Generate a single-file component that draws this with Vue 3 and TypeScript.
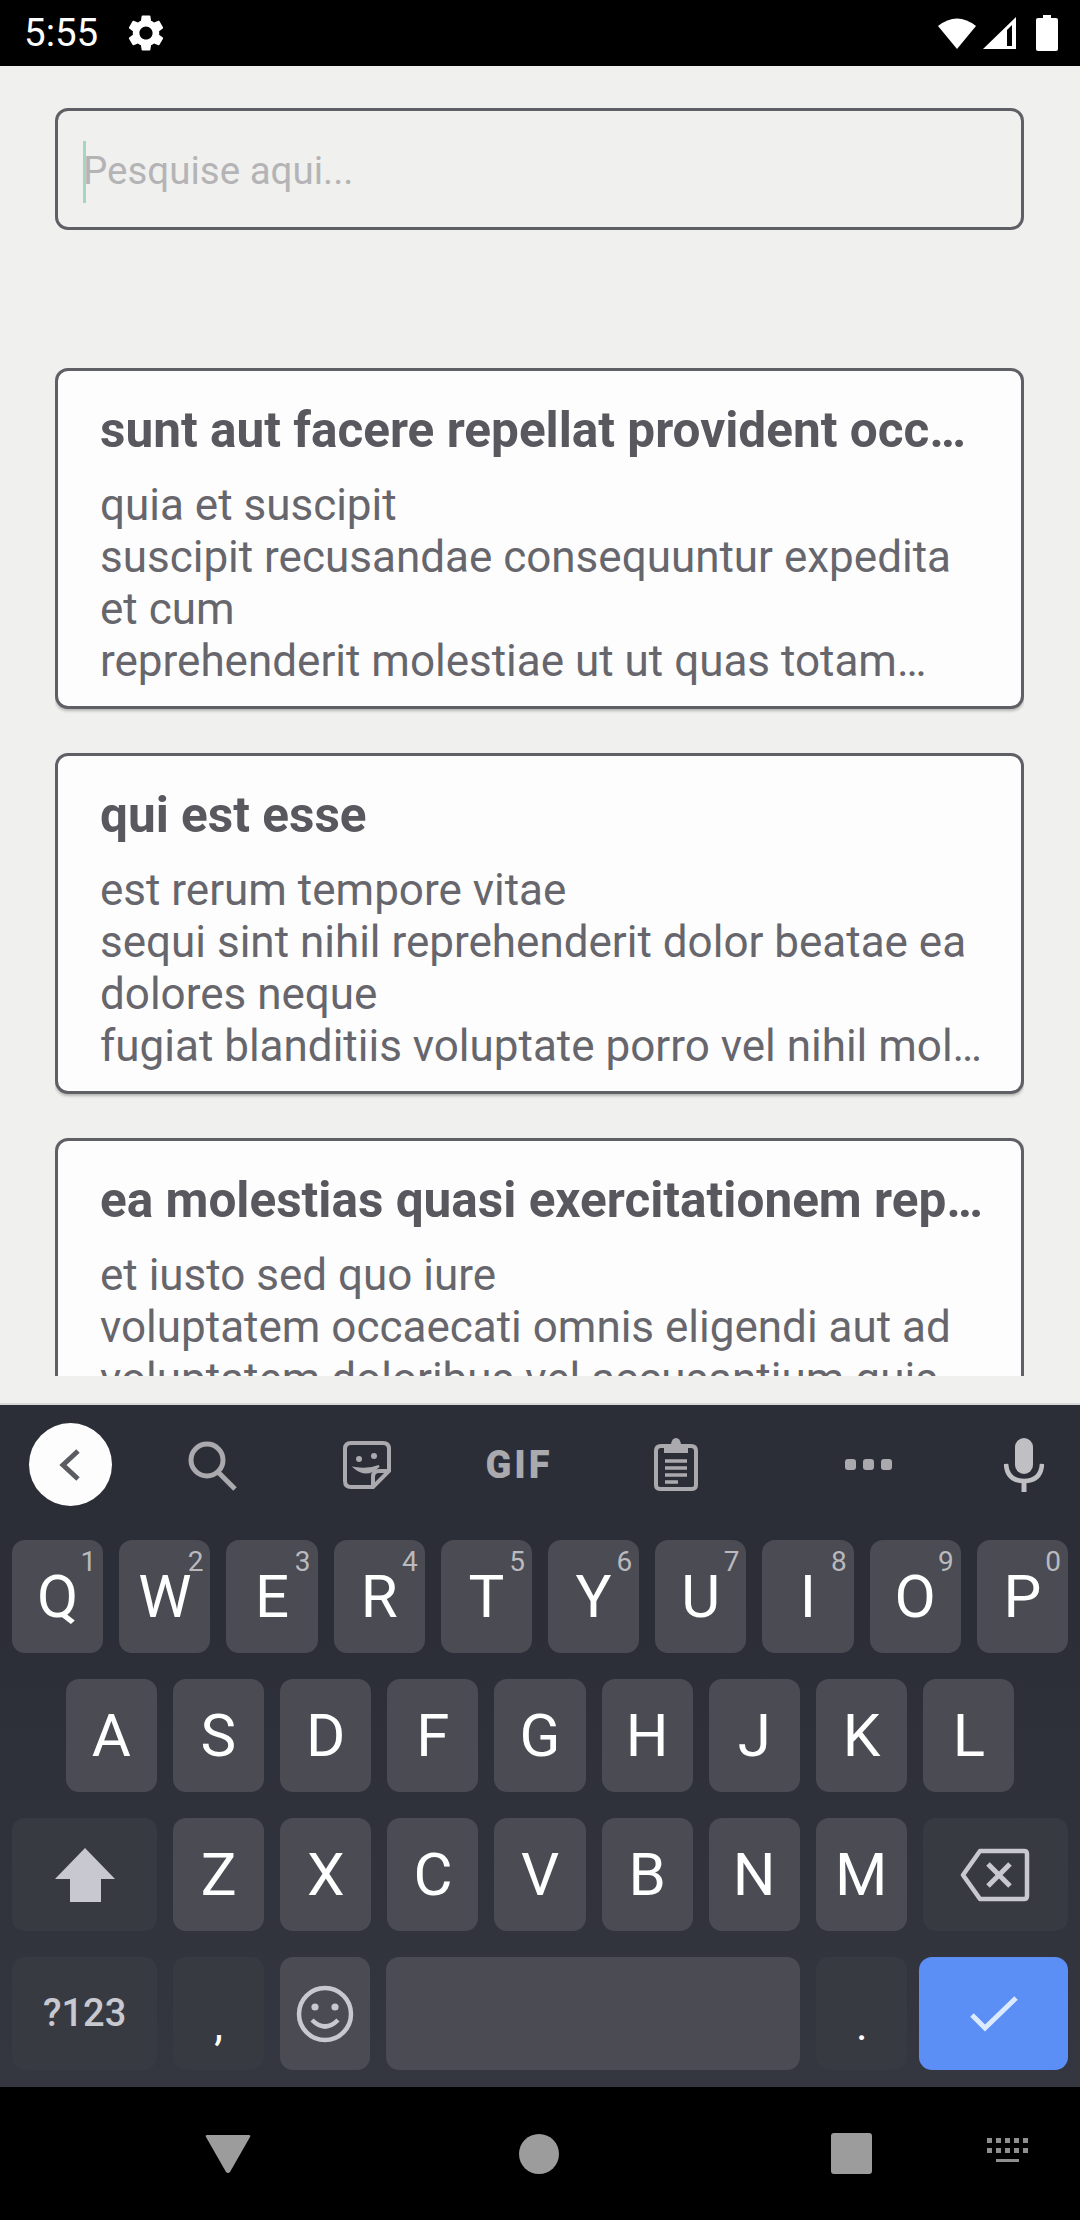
<script setup lang="ts">
interface Post {
  title: string
  lines: string
}

const posts: Post[] = [
  {
    title: 'sunt aut facere repellat provident occaecati excepturi optio reprehenderit',
    lines: 'quia et suscipit\nsuscipit recusandae consequuntur expedita et cum\nreprehenderit molestiae ut ut quas totam…',
  },
  {
    title: 'qui est esse',
    lines: 'est rerum tempore vitae\nsequi sint nihil reprehenderit dolor beatae ea dolores neque\nfugiat blanditiis voluptate porro vel nihil mol…',
  },
  {
    title: 'ea molestias quasi exercitationem repellat qui ipsa sit aut',
    lines: 'et iusto sed quo iure\nvoluptatem occaecati omnis eligendi aut ad\nvoluptatem doloribus vel accusantium quis',
  },
]

const row1 = [
  ['Q', '1'], ['W', '2'], ['E', '3'], ['R', '4'], ['T', '5'],
  ['Y', '6'], ['U', '7'], ['I', '8'], ['O', '9'], ['P', '0'],
]
const row2 = ['A', 'S', 'D', 'F', 'G', 'H', 'J', 'K', 'L']
const row3 = ['Z', 'X', 'C', 'V', 'B', 'N', 'M']
</script>

<template>
  <div class="screen">
    <header class="status">
      <span class="time">5:55</span>
      <svg class="gear" viewBox="0 0 24 24" width="44" height="44">
        <path fill="#fff" d="M19.14 12.94c.04-.3.06-.61.06-.94 0-.32-.02-.64-.07-.94l2.03-1.58c.18-.14.23-.41.12-.61l-1.92-3.32c-.12-.22-.37-.29-.59-.22l-2.39.96c-.5-.38-1.03-.7-1.62-.94l-.36-2.54c-.04-.24-.24-.41-.48-.41h-3.84c-.24 0-.43.17-.47.41l-.36 2.54c-.59.24-1.13.57-1.62.94l-2.39-.96c-.22-.08-.47 0-.59.22L2.74 8.87c-.12.21-.08.47.12.61l2.03 1.58c-.05.3-.09.63-.09.94s.02.64.07.94l-2.03 1.58c-.18.14-.23.41-.12.61l1.92 3.32c.12.22.37.29.59.22l2.39-.96c.5.38 1.03.7 1.62.94l.36 2.54c.05.24.24.41.48.41h3.84c.24 0 .44-.17.47-.41l.36-2.54c.59-.24 1.13-.56 1.62-.94l2.39.96c.22.08.47 0 .59-.22l1.92-3.32c.12-.22.07-.47-.12-.61l-2.01-1.58zM12 15.6c-1.98 0-3.6-1.62-3.6-3.6s1.62-3.6 3.6-3.6 3.6 1.62 3.6 3.6-1.62 3.6-3.6 3.6z" />
      </svg>
      <div class="status-right">
        <svg viewBox="0 0 40 34" width="40" height="34">
          <path fill="#fff" d="M20 33 L1 10 Q20 -5 39 10 Z" />
        </svg>
        <svg class="signal" viewBox="0 0 35 34" width="35" height="34">
          <path fill="#fff" d="M1 33 L34 1 V33 Z" />
          <path fill="#000" d="M25 14 L30 9 V30 H25 Z" />
        </svg>
        <svg class="battery" viewBox="0 0 22 36" width="22" height="36">
          <path fill="#fff" d="M7 0 H15 V3 H20 Q22 3 22 5 V34 Q22 36 20 36 H2 Q0 36 0 34 V5 Q0 3 2 3 H7 Z" />
        </svg>
      </div>
    </header>

    <main class="content">
      <div class="search">
        <span class="caret"></span>
        <span class="placeholder">Pesquise aqui...</span>
      </div>
      <div class="list">
        <article v-for="post in posts" :key="post.title" class="card">
          <h2 class="title">{{ post.title }}</h2>
          <p class="body">{{ post.lines }}</p>
        </article>
      </div>
    </main>

    <section class="keyboard">
      <div class="toolbar">
        <div class="tool">
          <span class="back">
            <svg viewBox="0 0 24 36" width="24" height="36">
              <path d="M20 4 L5 18 L20 32" fill="none" stroke="#5b5c62" stroke-width="5" />
            </svg>
          </span>
        </div>
        <div class="tool">
          <svg viewBox="0 0 56 56" width="56" height="56">
            <circle cx="23" cy="23" r="16" fill="none" stroke="#a9a9ae" stroke-width="5" />
            <path d="M34 35 L51 52" stroke="#a9a9ae" stroke-width="5" fill="none" />
          </svg>
        </div>
        <div class="tool">
          <svg viewBox="0 0 48 48" width="48" height="48">
            <path d="M8 2 H40 Q46 2 46 8 V30 L30 46 H8 Q2 46 2 40 V8 Q2 2 8 2 Z" fill="none" stroke="#a9a9ae" stroke-width="4" />
            <path d="M30 46 V36 Q30 30 36 30 H46" fill="none" stroke="#a9a9ae" stroke-width="4" />
            <circle cx="16" cy="18" r="3" fill="#a9a9ae" />
            <circle cx="31" cy="15" r="3" fill="#a9a9ae" />
            <path d="M12 27 Q24 37 36 25 Q26 29 12 27 Z" fill="#a9a9ae" stroke="#a9a9ae" stroke-width="2" />
          </svg>
        </div>
        <div class="tool"><span class="gif">GIF</span></div>
        <div class="tool">
          <svg viewBox="0 0 46 54" width="46" height="54">
            <path d="M8 8 H38 Q43 8 43 13 V47 Q43 51 38 51 H8 Q3 51 3 47 V13 Q3 8 8 8 Z" fill="none" stroke="#a9a9ae" stroke-width="4" />
            <path d="M11 6 H18 Q19 0 23 0 Q27 0 28 6 H35 V15 H11 Z" fill="#a9a9ae" />
            <path d="M12 23 H34 M12 30 H34 M12 37 H34 M12 44 H25" stroke="#a9a9ae" stroke-width="3.5" fill="none" />
          </svg>
        </div>
        <div class="tool dots"><i></i><i></i><i></i></div>
        <div class="tool">
          <svg viewBox="0 0 40 54" width="40" height="54">
            <rect x="11" y="0" width="18" height="36" rx="9" fill="#c0c0c4" />
            <path d="M2 26 Q3 43 20 43 Q37 43 38 26" fill="none" stroke="#c0c0c4" stroke-width="4.5" />
            <path d="M20 42 V54" stroke="#c0c0c4" stroke-width="5" />
          </svg>
        </div>
      </div>

      <div class="rows">
        <div class="row">
          <div v-for="[letter, hint] in row1" :key="letter" class="key">
            <span class="hint">{{ hint }}</span>{{ letter }}
          </div>
        </div>
        <div class="row row-inset">
          <div v-for="letter in row2" :key="letter" class="key">{{ letter }}</div>
        </div>
        <div class="row">
          <div class="key fn wide">
            <svg viewBox="0 0 60 54" width="60" height="54">
              <path d="M30 0 L60 31 H46 V54 H15 V31 H0 Z" fill="#c8c8d0" />
            </svg>
          </div>
          <div v-for="letter in row3" :key="letter" class="key">{{ letter }}</div>
          <div class="key fn wide">
            <svg viewBox="0 0 70 54" width="70" height="54">
              <path d="M20 3 H64 Q67 3 67 6 V48 Q67 51 64 51 H20 L3 27 Z" fill="none" stroke="#c8c8d0" stroke-width="4.5" stroke-linejoin="round" />
              <path d="M28 16 L50 38 M50 16 L28 38" stroke="#c8c8d0" stroke-width="5" fill="none" />
            </svg>
          </div>
        </div>
        <div class="row">
          <div class="key fn wide sym">?123</div>
          <div class="key fn punct">,</div>
          <div class="key">
            <svg viewBox="0 0 60 60" width="60" height="60">
              <circle cx="30" cy="30" r="26" fill="none" stroke="#c8c8d0" stroke-width="4.5" />
              <circle cx="20" cy="23" r="3.6" fill="#c8c8d0" />
              <circle cx="40" cy="23" r="3.6" fill="#c8c8d0" />
              <path d="M17 36 Q30 49 43 36" fill="none" stroke="#c8c8d0" stroke-width="4.5" />
            </svg>
          </div>
          <div class="key space"></div>
          <div class="key fn punct">.</div>
          <div class="key enter">
            <svg viewBox="0 0 50 38" width="50" height="38">
              <path d="M3 20 L16 33 L47 3" fill="none" stroke="#dceaff" stroke-width="5" />
            </svg>
          </div>
        </div>
      </div>
    </section>

    <nav class="navbar">
      <svg class="nav-back" viewBox="0 0 46 40" width="46" height="40">
        <path d="M2 1 H44 Q46 1 45 3 L25 38 Q23 40 21 38 L1 3 Q0 1 2 1 Z" fill="#9c9c9c" />
      </svg>
      <span class="nav-home"></span>
      <span class="nav-recent"></span>
      <svg class="nav-kbd" viewBox="0 0 42 38" width="42" height="38">
        <g fill="#8f8f8f">
          <rect x="0" y="3" width="5" height="5" /><rect x="9" y="3" width="5" height="5" />
          <rect x="18" y="3" width="5" height="5" /><rect x="27" y="3" width="5" height="5" />
          <rect x="36" y="3" width="5" height="5" /><rect x="0" y="13" width="5" height="5" />
          <rect x="9" y="13" width="5" height="5" /><rect x="18" y="13" width="5" height="5" />
          <rect x="27" y="13" width="5" height="5" /><rect x="36" y="13" width="5" height="5" />
          <rect x="9" y="24" width="23" height="3" />
        </g>
      </svg>
    </nav>
  </div>
</template>

<style scoped>
.screen {
  width: 1080px;
  height: 2220px;
  display: flex;
  flex-direction: column;
  overflow: hidden;
  background: #f0f0ee;
  font-family: Roboto, "Liberation Sans", sans-serif;
}

.status {
  flex: none;
  height: 66px;
  background: #000;
  display: flex;
  align-items: center;
  padding: 0 22px 0 24px;
  color: #fff;
}
.time {
  font-size: 38.5px;
  line-height: 66px;
  width: 100px;
}
.status-right {
  margin-left: auto;
  display: flex;
  align-items: center;
  gap: 5px;
}
.battery {
  margin-left: 14px;
}

.content {
  flex: none;
  height: 1337px;
  padding: 42px 56px 27px 55px;
  box-sizing: border-box;
  display: flex;
  flex-direction: column;
}
.search {
  flex: none;
  height: 122px;
  box-sizing: border-box;
  border: 3px solid #5f5f66;
  border-radius: 13px;
  display: flex;
  align-items: center;
  padding-left: 25px;
  position: relative;
}
.caret {
  position: absolute;
  left: 25px;
  top: 30px;
  width: 3px;
  height: 62px;
  background: #a5d6c5;
}
.placeholder {
  font-size: 38.5px;
  color: #b4b4b6;
  line-height: 60px;
  margin-top: 4px;
}
.list {
  flex: 1;
  min-height: 0;
  overflow: hidden;
  margin-top: 138px;
  display: flex;
  flex-direction: column;
  gap: 44px;
}
.card {
  flex: none;
  height: 341px;
  box-sizing: border-box;
  background: #fdfdfd;
  border: 3px solid #5f5f66;
  border-radius: 13px;
  padding: 30px 36px 0 42px;
  box-shadow: 0 2px 3px rgba(0, 0, 0, 0.25);
}
.title {
  margin: 0;
  font-size: 49.5px;
  font-weight: 700;
  line-height: 58px;
  color: #58585e;
  white-space: nowrap;
  overflow: hidden;
  text-overflow: ellipsis;
}
.body {
  margin: 20px 0 0;
  font-size: 44px;
  line-height: 52px;
  color: #66666c;
  white-space: pre-line;
}

.keyboard {
  flex: none;
  height: 684px;
  background: linear-gradient(#2c2e37, #2c2e37 30%, #343640);
  border-top: 2px solid #d8d8d8;
  box-sizing: border-box;
  display: flex;
  flex-direction: column;
}
.toolbar {
  flex: none;
  height: 135px;
  display: grid;
  grid-template-columns: 140px 144px 166px 138px 176px 208px 104px;
  align-items: center;
  padding-bottom: 16px;
  box-sizing: border-box;
}
.tool {
  display: flex;
  align-items: center;
  justify-content: center;
}
.back {
  width: 83px;
  height: 83px;
  border-radius: 50%;
  background: #fdfdfd;
  display: flex;
  align-items: center;
  justify-content: center;
}
.gif {
  font-size: 38px;
  line-height: 40px;
  font-weight: 900;
  color: #a9a9ae;
  letter-spacing: 3px;
}
.dots {
  gap: 7px;
}
.dots i {
  width: 11px;
  height: 11px;
  border-radius: 3px;
  background: #a9a9ae;
}

.rows {
  display: flex;
  flex-direction: column;
  gap: 26px;
}
.row {
  height: 113px;
  display: flex;
  gap: 16px;
  padding: 0 12px;
}
.row-inset {
  padding: 0 65.6px;
}
.key {
  flex: 1 1 0;
  min-width: 0;
  position: relative;
  background: #4a4b53;
  border-radius: 13px;
  display: flex;
  align-items: center;
  justify-content: center;
  color: #fff;
  font-size: 60px;
  line-height: 113px;
}
.hint {
  position: absolute;
  right: 7px;
  top: 6px;
  font-size: 28px;
  line-height: 32px;
  color: #b9b9be;
}
.fn {
  background: #383a42;
}
.wide {
  flex: none;
  width: 145.2px;
}
.sym {
  font-size: 38px;
  font-weight: 500;
  color: #c8c8d0;
}
.punct {
  font-size: 44px;
  padding-top: 24px;
  box-sizing: border-box;
}
.space {
  flex: none;
  width: 414px;
}
.enter {
  flex: none;
  width: 149px;
  margin-left: -4px;
  background: #5b8ff5;
}

.navbar {
  flex: 1;
  background: #000;
  display: flex;
  align-items: center;
  padding-left: 205px;
}
.nav-home {
  margin-left: 268px;
  width: 40px;
  height: 40px;
  border-radius: 50%;
  background: #9c9c9c;
}
.nav-recent {
  margin-left: 272px;
  width: 41px;
  height: 41px;
  border-radius: 3px;
  background: #9c9c9c;
}
.nav-kbd {
  margin-left: 115px;
}
</style>
